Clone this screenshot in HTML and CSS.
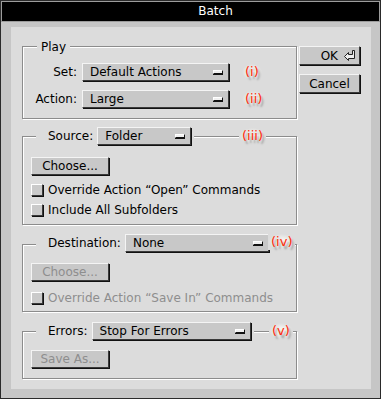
FILE: index.html
```html
<!DOCTYPE html>
<html lang="en">
<head>
  <meta charset="UTF-8" />
  <title>Batch</title>
  <link rel="stylesheet" href="styles.css">
</head>
<body>

  <div class="window">
    <div class="titlebar">Batch</div>

    <div class="frame">
      <div class="panel">

        <div class="groups">
          <!-- Play -->
          <div class="group group-play">
            <div class="legend legend-play">Play</div>
            <div class="play-rows">
              <span class="row-label">Set:</span>
              <div class="popup popup-set"><span>Default Actions</span><i class="popup-mark"></i></div>
              <span class="note">(i)</span>

              <span class="row-label">Action:</span>
              <div class="popup popup-set"><span>Large</span><i class="popup-mark"></i></div>
              <span class="note">(ii)</span>
            </div>
          </div>

          <!-- Source -->
          <div class="group group-source">
            <div class="legend">
              <span>Source:</span>
              <div class="popup popup-source"><span>Folder</span><i class="popup-mark"></i></div>
            </div>
            <span class="note note-line note-iii">(iii)</span>
            <button class="btn btn-choose">Choose...</button>
            <div class="check-row"><i class="check"></i>Override Action “Open” Commands</div>
            <div class="check-row"><i class="check"></i>Include All Subfolders</div>
          </div>

          <!-- Destination -->
          <div class="group group-dest">
            <div class="legend legend-dest">
              <span>Destination:</span>
              <div class="popup popup-dest"><span>None</span><i class="popup-mark"></i></div>
            </div>
            <span class="note note-line note-iv">(iv)</span>
            <button class="btn btn-choose disabled">Choose...</button>
            <div class="check-row disabled"><i class="check"></i>Override Action “Save In” Commands</div>
          </div>

          <!-- Errors -->
          <div class="group group-errors">
            <div class="legend">
              <span>Errors:</span>
              <div class="popup popup-errors"><span>Stop For Errors</span><i class="popup-mark"></i></div>
            </div>
            <span class="note note-line note-v">(v)</span>
            <button class="btn btn-choose disabled">Save As...</button>
          </div>
        </div>

        <div class="actions">
          <button class="btn btn-ok">OK
            <svg width="12" height="11" viewBox="0 0 12 11">
              <path d="M0.5 6.5 L4.5 2.5 V4.5 H8.5 V0.5 H10.5 V8.5 H4.5 V10.5 Z" fill="#eee" stroke="#222" stroke-width="1"/>
            </svg>
          </button>
          <button class="btn">Cancel</button>
        </div>

      </div>
    </div>
  </div>

</body>
</html>
```

FILE: styles.css
```css
body {
  margin: 0;
  font-family: 'DejaVu Sans', sans-serif;
  font-size: 12px;
  color: #000;
  background-color: #c6c6c6;
}

.window {
  width: 381px;
  height: 399px;
  box-sizing: border-box;
  border: 1px solid #2a2a2a;
  background: #c6c6c6;
  display: flex;
  flex-direction: column;
}

.titlebar {
  height: 21px;
  box-sizing: border-box;
  border: 1px solid #9c9c9c;
  background: #000;
  color: #fff;
  text-align: center;
  padding-left: 50px;
  line-height: 19px;
  font-size: 12px;
}

.frame {
  flex: 1;
  display: flex;
  padding: 5px 9px 9px 10px;
}

.panel {
  flex: 1;
  display: flex;
  gap: 2px;
  padding: 19px 0 0 11px;
  background: #dcdcdc;
}

.groups {
  width: 275px;
}

.group {
  position: relative;
  border: 1px solid #8c8c8c;
  box-shadow: inset 1px 1px 0 #fff, 1px 1px 0 #fff;
}

.group-source { margin-top: 17px; padding: 20px 0 4px 8px; }
.group-dest   { margin-top: 19px; padding: 18px 0 3px 8px; }
.group-errors { margin-top: 19px; padding: 18px 0 10px 8px; }

.legend {
  position: absolute;
  top: -10px;
  left: 13px;
  display: flex;
  align-items: center;
  gap: 4px;
  padding: 0 3px 0 12px;
  background: #dcdcdc;
  line-height: 18px;
}

.legend-play {
  top: -9px;
  left: 14px;
  padding: 0 4px;
}

.legend-dest { top: -11px; }

.play-rows {
  display: grid;
  grid-template-columns: 44px 147px auto;
  column-gap: 5px;
  row-gap: 9px;
  align-items: center;
  padding: 16px 0 10px 10px;
}

.row-label {
  text-align: right;
}

/* popup menus */
.popup {
  height: 18px;
  box-sizing: border-box;
  display: flex;
  align-items: center;
  justify-content: space-between;
  padding: 0 5px 0 7px;
  background: #c8c8c8;
  border: 1px solid;
  border-color: #f4f4f4 #3a3a3a #3a3a3a #f4f4f4;
  box-shadow: 1px 1px 0 #111;
  line-height: 16px;
}

.popup-source { width: 94px; }
.popup-dest   { width: 144px; }
.popup-errors { width: 159px; }

.popup-mark {
  width: 8px;
  height: 2px;
  background: #f0f0f0;
  border: 1px solid;
  border-color: #fff #111 #111 #fff;
  box-shadow: 0 1px 0 #111;
}

/* buttons */
.btn {
  display: flex;
  align-items: center;
  justify-content: center;
  gap: 6px;
  height: 19px;
  box-sizing: border-box;
  padding: 0;
  font: inherit;
  color: #000;
  background: #c8c8c8;
  border: 1px solid;
  border-color: #f4f4f4 #3a3a3a #3a3a3a #f4f4f4;
  box-shadow: 1px 1px 0 #111;
  line-height: 16px;
}

.btn-choose {
  width: 78px;
  height: 18px;
}

.actions {
  width: 62px;
  display: flex;
  flex-direction: column;
  gap: 9px;
}

.actions .btn {
  width: 61px;
}

.btn-ok {
  justify-content: flex-end;
  padding-right: 3px;
}

.disabled {
  color: #8e8e8e;
}

/* checkboxes */
.check-row {
  display: flex;
  align-items: center;
  gap: 5px;
  height: 20px;
}

.group-source .btn-choose + .check-row { margin-top: 5px; }
.group-dest .btn-choose + .check-row { margin-top: 7px; }

.check {
  width: 12px;
  height: 12px;
  box-sizing: border-box;
  background: #cacaca;
  border: 1px solid;
  border-color: #fff #3a3a3a #3a3a3a #fff;
  box-shadow: 1px 1px 0 #111;
}

/* red annotation marks */
.note {
  justify-self: start;
  margin-left: 8px;
  padding: 1px 3px;
  line-height: 14px;
  color: #ff2a0a;
  font-size: 13px;
  background: radial-gradient(ellipse closest-side, #f4f4f0 35%, #dcdcdc 100%);
  text-shadow: 2px 3px 2px rgba(0, 0, 0, 0.35);
}

.note-line {
  position: absolute;
  margin: 0;
}

.note-iii { left: 216px; top: -9px; }
.note-iv  { left: 245px; top: -11px; }
.note-v   { left: 246px; top: -9px; }
```
